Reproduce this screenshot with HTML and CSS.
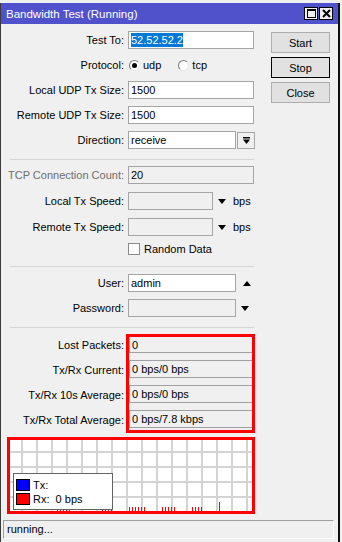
FILE: index.html
```html
<!DOCTYPE html>
<html lang="en">
<head>
    <meta charset="UTF-8">
    <meta name="viewport" content="width=device-width, initial-scale=1.0">
    <title>Bandwidth Test</title>
    <link rel="stylesheet" href="styles.css">
</head>
<body>
    <div class="window">
        <div class="titlebar">
            <span class="title">Bandwidth Test (Running)</span>
            <div class="title-buttons">
                <span class="tbtn">
                    <svg width="11" height="11" viewBox="0 0 11 11"><rect x="1.5" y="1.5" width="8" height="8" fill="none" stroke="#000" stroke-width="1"/><rect x="1" y="1" width="9" height="2" fill="#000"/></svg>
                </span>
                <span class="tbtn">
                    <svg width="11" height="11" viewBox="0 0 11 11"><path d="M2 2 L9 9 M9 2 L2 9" stroke="#000" stroke-width="2"/></svg>
                </span>
            </div>
        </div>

        <div class="content">
            <div class="main">
                <div class="form">
                    <div class="row">
                        <label>Test To:</label>
                        <div class="input wide"><span class="selected">52.52.52.2</span></div>
                    </div>
                    <div class="row">
                        <label>Protocol:</label>
                        <div class="radios">
                            <span class="radio checked"></span><span class="radio-text">udp</span>
                            <span class="radio"></span><span class="radio-text">tcp</span>
                        </div>
                    </div>
                    <div class="row">
                        <label>Local UDP Tx Size:</label>
                        <div class="input wide">1500</div>
                    </div>
                    <div class="row">
                        <label>Remote UDP Tx Size:</label>
                        <div class="input wide">1500</div>
                    </div>
                    <div class="row">
                        <label>Direction:</label>
                        <div class="combo">
                            <div class="input medium">receive</div>
                            <span class="drop-btn">
                                <svg width="9" height="9" viewBox="0 0 9 9"><rect x="1" y="1" width="7" height="1.5" fill="#000"/><path d="M1 3.5 H8 L4.5 8 Z" fill="#000"/></svg>
                            </span>
                        </div>
                    </div>

                    <div class="separator"></div>

                    <div class="row loose">
                        <label class="disabled">TCP Connection Count:</label>
                        <div class="input wide grey">20</div>
                    </div>
                    <div class="row loose">
                        <label>Local Tx Speed:</label>
                        <div class="combo">
                            <div class="input short grey"></div>
                            <span class="tri down"></span>
                            <span class="unit">bps</span>
                        </div>
                    </div>
                    <div class="row tight">
                        <label>Remote Tx Speed:</label>
                        <div class="combo">
                            <div class="input short grey"></div>
                            <span class="tri down"></span>
                            <span class="unit">bps</span>
                        </div>
                    </div>
                    <div class="row">
                        <span></span>
                        <div class="check-line">
                            <span class="checkbox"></span><span>Random Data</span>
                        </div>
                    </div>

                    <div class="separator sep-mid"></div>

                    <div class="row">
                        <label>User:</label>
                        <div class="combo">
                            <div class="input medium">admin</div>
                            <span class="tri up"></span>
                        </div>
                    </div>
                    <div class="row">
                        <label>Password:</label>
                        <div class="combo">
                            <div class="input medium grey"></div>
                            <span class="tri down"></span>
                        </div>
                    </div>

                    <div class="separator"></div>

                    <div class="readouts">
                        <div class="readout-labels">
                            <label>Lost Packets:</label>
                            <label>Tx/Rx Current:</label>
                            <label>Tx/Rx 10s Average:</label>
                            <label>Tx/Rx Total Average:</label>
                        </div>
                        <div class="readout-box">
                            <div class="field first">0</div>
                            <div class="field">0 bps/0 bps</div>
                            <div class="field">0 bps/0 bps</div>
                            <div class="field">0 bps/7.8 kbps</div>
                        </div>
                    </div>
                </div>

                <div class="actions">
                    <button>Start</button>
                    <button class="focused">Stop</button>
                    <button>Close</button>
                </div>
            </div>

            <div class="graph">
                <svg class="ticks" width="242" height="71" viewBox="0 0 242 71">
                    <g stroke="#f00" stroke-width="1">
                        <path d="M47.5 67 V71 M50.5 67 V71 M53.5 67 V71 M56.5 67 V71 M59.5 67 V71"/>
                        <path d="M92.5 67 V71 M95.5 67 V71 M98.5 67 V71 M101.5 67 V71"/>
                        <path d="M119.5 67 V71 M122.5 67 V71 M125.5 67 V71 M128.5 67 V71 M131.5 67 V71 M134.5 67 V71"/>
                        <path d="M152.5 67 V71 M155.5 67 V71 M158.5 67 V71 M161.5 67 V71 M164.5 67 V71"/>
                        <path d="M182.5 67 V71 M185.5 67 V71 M188.5 67 V71 M191.5 67 V71"/>
                        <path d="M209.5 62 V71"/>
                    </g>
                </svg>
                <div class="legend">
                    <div class="legend-row"><span class="swatch tx"></span><span>Tx:</span></div>
                    <div class="legend-row"><span class="swatch rx"></span><span>Rx:&nbsp;&nbsp;0 bps</span></div>
                </div>
            </div>

            <div class="status">running...</div>
        </div>
    </div>
</body>
</html>
```

FILE: styles.css
```css
body {
    font-family: "Liberation Sans", Arial, sans-serif;
    font-size: 11px;
    color: #000;
    background-color: #f0f0f0;
    margin: 0;
    padding: 3px 0 0 0;
}

.window {
    width: 340px;
    height: 539px;
    box-sizing: border-box;
    border-left: 1px solid #3a3a3a;
    border-right: 2px solid #111;
    background-color: #f0f0f0;
    display: flex;
    flex-direction: column;
}

.titlebar {
    height: 21px;
    background-color: #5052cc;
    color: #fff;
    display: flex;
    align-items: center;
    justify-content: space-between;
    padding: 0 5px 0 5px;
}

.title {
    font-size: 11.5px;
}

.title-buttons {
    display: flex;
    gap: 1px;
}

.tbtn {
    width: 14px;
    height: 13px;
    box-sizing: border-box;
    background-color: #f0f0f0;
    border: 1px solid #000;
    display: flex;
    align-items: center;
    justify-content: center;
}

.content {
    flex: 1;
    display: flex;
    flex-direction: column;
}

.main {
    display: flex;
}

.form {
    width: 270px;
    padding-top: 7px;
}

.row {
    display: grid;
    grid-template-columns: 123px auto;
    column-gap: 4px;
    height: 18px;
    margin-bottom: 7px;
    align-items: center;
}

.row.loose {
    margin-bottom: 8px;
}

.row.tight {
    margin-bottom: 4px;
}

.row label,
.readout-labels label {
    text-align: right;
    white-space: nowrap;
}

.disabled {
    color: #6d6d6d;
}

.input {
    height: 18px;
    box-sizing: border-box;
    border: 1px solid #a5a5a5;
    background-color: #fff;
    padding: 0 2px;
    line-height: 16px;
    white-space: nowrap;
    overflow: hidden;
}

.input.wide {
    width: 126px;
}

.input.medium {
    width: 108px;
}

.input.short {
    width: 85px;
}

.input.grey {
    background-color: #f0f0f0;
}

.selected {
    background-color: #0078d7;
    color: #fff;
    display: inline-block;
    line-height: 14px;
}

.radios {
    display: flex;
    align-items: center;
}

.radio {
    width: 11px;
    height: 11px;
    box-sizing: border-box;
    border-radius: 50%;
    border: 1px solid;
    border-color: #7a7a7a #e8e8e8 #e8e8e8 #7a7a7a;
    background-color: #fff;
    margin-left: 1px;
    position: relative;
}

.radio.checked::after {
    content: "";
    position: absolute;
    left: 2px;
    top: 2px;
    width: 5px;
    height: 5px;
    border-radius: 50%;
    background-color: #000;
}

.radio-text {
    margin-left: 3px;
    margin-right: 16px;
}

.combo {
    display: flex;
    align-items: center;
}

.drop-btn {
    width: 18px;
    height: 17px;
    box-sizing: border-box;
    margin-left: 1px;
    border: 1px solid #a5a5a5;
    background-color: #f0f0f0;
    display: flex;
    align-items: center;
    justify-content: center;
}

.tri {
    width: 0;
    height: 0;
    border-left: 4px solid transparent;
    border-right: 4px solid transparent;
}

.tri.down {
    border-top: 5px solid #000;
    margin-left: 5px;
}

.tri.up {
    border-bottom: 5px solid #000;
    margin-left: 7px;
}

.unit {
    margin-left: 7px;
}

.check-line {
    display: flex;
    align-items: center;
}

.checkbox {
    width: 12px;
    height: 12px;
    box-sizing: border-box;
    border: 1px solid #8a8a8a;
    background-color: #fff;
    margin-right: 4px;
}

.separator {
    height: 1px;
    background-color: #d7d7d7;
    margin: 10px 17px 6px 9px;
}

.sep-mid {
    margin-top: 8px;
    margin-bottom: 7px;
}

.readouts {
    display: grid;
    grid-template-columns: 123px auto;
    column-gap: 4px;
}

.readout-labels {
    display: flex;
    flex-direction: column;
    gap: 7px;
    padding-top: 2px;
}

.readout-labels label {
    line-height: 18px;
}

.readout-box {
    width: 129px;
    height: 99px;
    box-sizing: border-box;
    margin-left: -2px;
    border: 3px solid #f00;
    padding-bottom: 2px;
    display: flex;
    flex-direction: column;
    gap: 7px;
}

.field {
    height: 18px;
    box-sizing: border-box;
    border: 1px solid #a0a0a0;
    border-right: none;
    line-height: 16px;
    padding-left: 2px;
}

.field.first {
    height: 16px;
    border-top: none;
}

.actions {
    display: flex;
    flex-direction: column;
    gap: 4px;
    padding-top: 8px;
}

button {
    width: 59px;
    height: 21px;
    font-family: "Liberation Sans", Arial, sans-serif;
    font-size: 11px;
    background-color: #e1e1e1;
    border: 1px solid #adadad;
    padding: 0;
    color: #000;
}

button.focused {
    border-color: #000;
}

.graph {
    position: relative;
    width: 248px;
    height: 77px;
    box-sizing: border-box;
    margin: 4px 0 0 6px;
    border: 3px solid #f00;
    background-color: #fff;
    background-image:
        linear-gradient(to right, #d4d4d4 2px, transparent 2px),
        linear-gradient(to bottom, #d4d4d4 2px, transparent 2px);
    background-size: 15px 15px;
    background-position: 11px 11px;
}

.ticks {
    position: absolute;
    left: 0;
    top: 0;
}

.legend {
    position: absolute;
    left: 3px;
    bottom: 1px;
    width: 100px;
    height: 37px;
    box-sizing: border-box;
    border: 1px solid #646464;
    background-color: #fff;
    padding: 5px 0 0 2px;
    display: flex;
    flex-direction: column;
    gap: 3px;
}

.legend-row {
    display: flex;
    align-items: center;
    height: 11px;
}

.swatch {
    width: 14px;
    height: 12px;
    box-sizing: border-box;
    border: 1px solid #000;
    margin-right: 3px;
}

.swatch.tx {
    background-color: #00f;
}

.swatch.rx {
    background-color: #f00;
}

.status {
    margin: 6px 0 0 2px;
    width: 331px;
    height: 19px;
    box-sizing: border-box;
    border: 1px solid;
    border-color: #a0a0a0 #fff #fff #a0a0a0;
    padding-left: 3px;
    line-height: 17px;
}
```
